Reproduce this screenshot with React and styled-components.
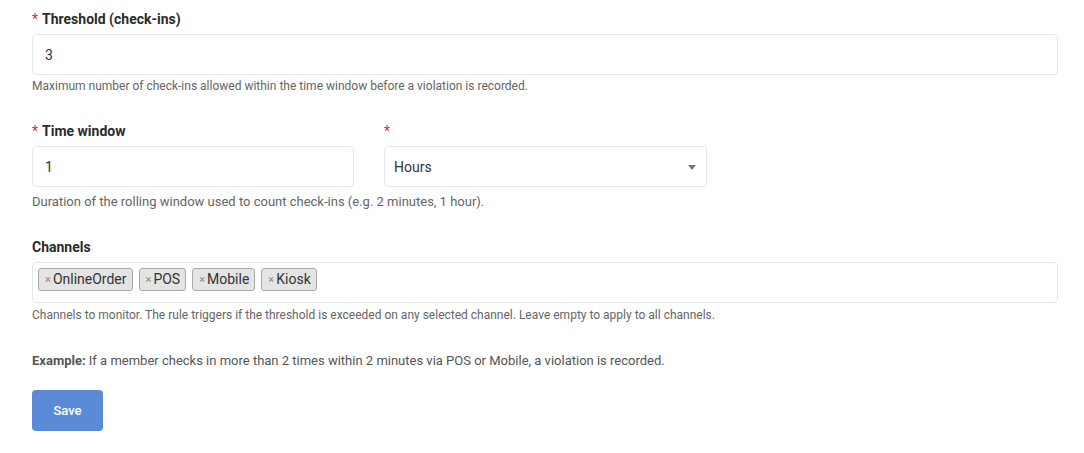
import styled, { createGlobalStyle } from "styled-components";

const GlobalStyle = createGlobalStyle`
  body {
    margin: 0;
    background: #ffffff;
    font-family: Roboto, "Liberation Sans", Arial, sans-serif;
    color: #333;
  }
`;

export const Form = styled.form`
  display: flex;
  flex-direction: column;
  padding: 11px 26px 0 32px;
`;

export const Field = styled.div`
  display: flex;
  flex-direction: column;
  margin-bottom: ${(p) => p.$gap || 30}px;
`;

export const Row = styled.div`
  display: flex;
  gap: 30px;
`;

export const Col = styled.div`
  display: flex;
  flex-direction: column;
  width: ${(p) => p.$w || 322}px;
`;

export const Label = styled.label`
  font-size: 14px;
  line-height: 17px;
  font-weight: 700;
  color: #2b2b2b;
  min-height: 17px;
  margin-bottom: 6px;

  span {
    color: #e4261c;
    margin-right: 4px;
    font-weight: 400;
  }
`;

export const Input = styled.div`
  box-sizing: border-box;
  height: 41px;
  border: 1px solid #e2e8f0;
  border-radius: 4px;
  padding: 0 12px;
  display: flex;
  align-items: center;
  font-size: 14px;
  color: #333;
  background: #fff;
`;

export const Select = styled(Input)`
  justify-content: space-between;
  padding: 0 10px 0 9px;
`;

export const Caret = styled.i`
  width: 0;
  height: 0;
  border-left: 4px solid transparent;
  border-right: 4px solid transparent;
  border-top: 5px solid #777;
  margin-top: 2px;
`;

export const TagBox = styled(Input)`
  align-items: flex-start;
  padding: 5px 5px 0;
  gap: 6px;
`;

export const Tag = styled.span`
  display: inline-flex;
  align-items: center;
  box-sizing: border-box;
  height: 23px;
  padding: 0 5px 1px 6px;
  background: #e4e4e4;
  border: 1px solid #aaa;
  border-radius: 3px;
  font-size: 14px;
  color: #333;

  b {
    font-weight: 400;
    color: #888;
    font-size: 11px;
    margin-right: 2px;
  }
`;

export const Help = styled.div`
  margin-top: ${(p) => p.$top || 4}px;
  font-size: ${(p) => p.$size || 12}px;
  line-height: 14px;
  color: #666;
`;

export const Example = styled.p`
  margin: 0 0 22px;
  font-size: 13px;
  line-height: 15px;
  color: #555;

  strong {
    font-weight: 700;
  }
`;

export const Button = styled.button`
  width: 71px;
  height: 41px;
  border: none;
  border-radius: 4px;
  background: #5b8ad7;
  color: #fff;
  font-family: inherit;
  font-size: 13px;
  font-weight: 500;
`;

const channels = ["OnlineOrder", "POS", "Mobile", "Kiosk"];

function App() {
  return (
    <>
      <GlobalStyle />
      <Form>
        <Field>
          <Label>
            <span>*</span>Threshold (check-ins)
          </Label>
          <Input>3</Input>
          <Help>
            Maximum number of check-ins allowed within the time window before a violation is
            recorded.
          </Help>
        </Field>

        <Field>
          <Row>
            <Col>
              <Label>
                <span>*</span>Time window
              </Label>
              <Input>1</Input>
            </Col>
            <Col $w={323}>
              <Label>
                <span>*</span>
              </Label>
              <Select>
                Hours
                <Caret />
              </Select>
            </Col>
          </Row>
          <Help $top={8} $size={13}>
            Duration of the rolling window used to count check-ins (e.g. 2 minutes, 1 hour).
          </Help>
        </Field>

        <Field $gap={31}>
          <Label>Channels</Label>
          <TagBox>
            {channels.map((c) => (
              <Tag key={c}>
                <b>×</b>
                {c}
              </Tag>
            ))}
          </TagBox>
          <Help $top={5}>
            Channels to monitor. The rule triggers if the threshold is exceeded on any selected
            channel. Leave empty to apply to all channels.
          </Help>
        </Field>

        <Example>
          <strong>Example:</strong> If a member checks in more than 2 times within 2 minutes via
          POS or Mobile, a violation is recorded.
        </Example>

        <div>
          <Button type="button">Save</Button>
        </div>
      </Form>
    </>
  );
}

export default App;
